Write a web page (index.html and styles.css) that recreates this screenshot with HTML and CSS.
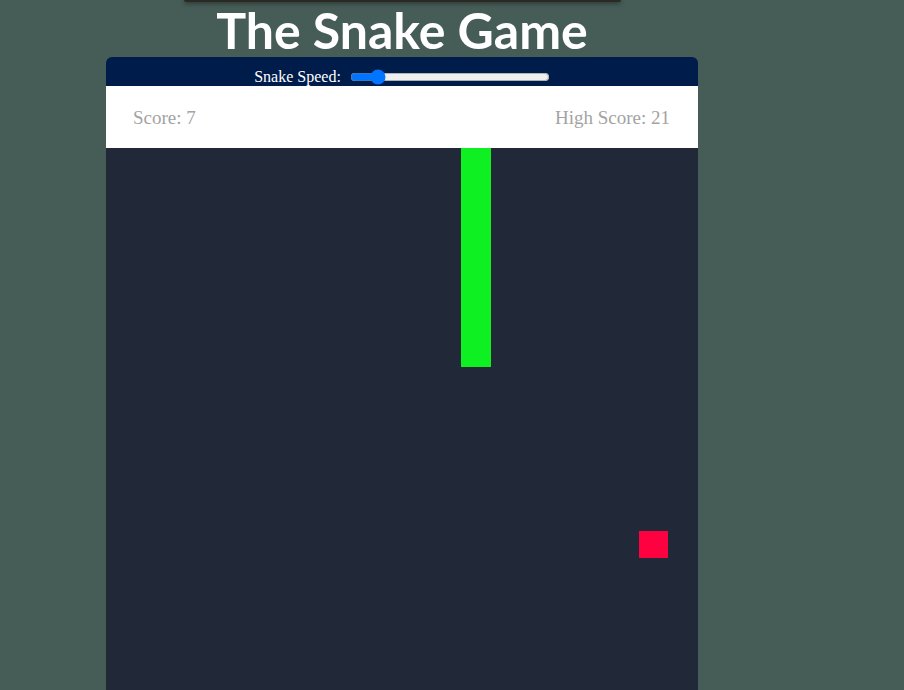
FILE: index.html
```html
<!DOCTYPE html>
<html>
<head>
<meta charset="utf-8">
<title>The Snake Game</title>
<link rel="stylesheet" href="styles.css">
</head>
<body>
<div class="wrap">
  <div class="topbar"></div>
  <h1 class="title">The Snake Game</h1>
  <div class="game">
    <div class="controls">
      <label class="speed-label" for="speed">Snake Speed:</label>
      <input class="speed" id="speed" type="range" min="1" max="10" value="2">
    </div>
    <div class="scores">
      <span class="score">Score: 7</span>
      <span class="score">High Score: 21</span>
    </div>
    <svg class="board" width="592" height="600" viewBox="0 0 592 600">
      <rect x="0" y="0" width="592" height="600" fill="#212838"/>
      <rect x="355" y="0" width="30" height="219" fill="#0ef021"/>
      <rect x="533" y="383" width="29" height="27" fill="#ff0040"/>
    </svg>
  </div>
</div>
</body>
</html>
```

FILE: styles.css
```css
html, body {
  margin: 0;
  padding: 0;
  background: #465c57;
  overflow: hidden;
}
.wrap {
  width: 592px;
  margin-left: 106px;
  display: flex;
  flex-direction: column;
  align-items: center;
}
.topbar {
  width: 437px;
  height: 2px;
  background: #2b2a22;
  box-shadow: 0 1px 4px rgba(0, 0, 0, 0.7);
  border-radius: 0 0 3px 3px;
}
.title {
  margin: 0;
  height: 55px;
  line-height: 57px;
  font-family: Lato, "Open Sans", sans-serif;
  font-weight: 700;
  font-size: 50px;
  color: #ffffff;
}
.game {
  width: 592px;
  display: flex;
  flex-direction: column;
  border-radius: 6px 6px 0 0;
  overflow: hidden;
}
.controls {
  height: 29px;
  background: #001c4a;
  display: flex;
  align-items: center;
  justify-content: center;
  gap: 9px;
}
.speed-label {
  font-family: "Liberation Serif", serif;
  font-size: 16px;
  color: #ffffff;
  margin-top: 10px;
}
.speed {
  width: 200px;
  margin: 10px 0 0 0;
}
.scores {
  height: 62px;
  background: #ffffff;
  display: flex;
  align-items: center;
  justify-content: space-between;
  padding: 0 28px 0 27px;
}
.score {
  font-family: "Liberation Serif", serif;
  font-size: 19px;
  color: #a3a3a3;
  padding-top: 1px;
}
.board {
  display: block;
}
```
